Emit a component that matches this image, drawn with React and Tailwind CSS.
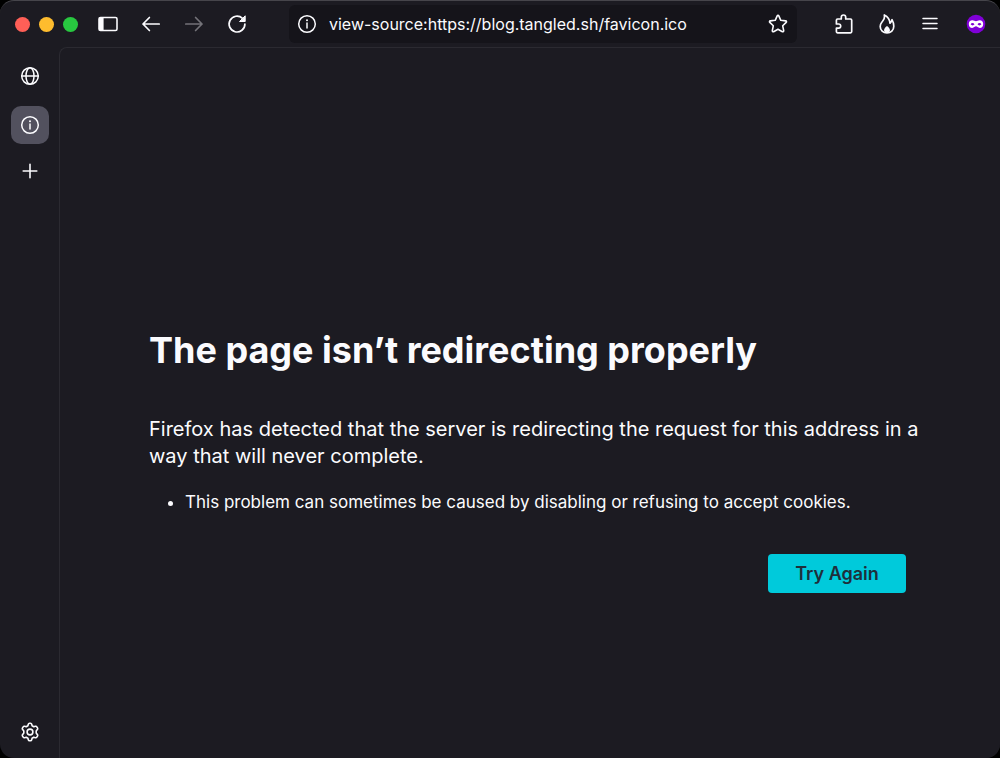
import React from "react";

const icon = {
  fill: "none",
  stroke: "currentColor",
  strokeLinecap: "round",
  strokeLinejoin: "round",
};

function SidebarIcon() {
  return (
    <svg width="20" height="16" viewBox="0 0 20 16" aria-hidden="true">
      <rect x="1" y="1.5" width="18" height="13" rx="1.5" fill="none" stroke="currentColor" strokeWidth="1.6" />
      <path d="M1 2h4.600v12H1z" fill="currentColor" />
    </svg>
  );
}

function BackIcon() {
  return (
    <svg width="20" height="20" viewBox="0 0 20 20" strokeWidth="1.7" aria-hidden="true" {...icon}>
      <path d="M18.2 10H2M8.4 3.5L2 10l6.4 6.5" />
    </svg>
  );
}

function ForwardIcon() {
  return (
    <svg width="20" height="20" viewBox="0 0 20 20" strokeWidth="1.7" aria-hidden="true" {...icon}>
      <path d="M1.8 10H18M11.6 3.5L18 10l-6.4 6.5" />
    </svg>
  );
}

function ReloadIcon() {
  return (
    <svg width="20" height="20" viewBox="0 0 20 20" strokeWidth="1.7" aria-hidden="true" {...icon}>
      <path d="M17.900 10a7.900 7.900 0 1 1-2.400-5.600" />
      <path d="M18.200 2.200v5.300h-5.300z" fill="currentColor" strokeWidth="1" />
    </svg>
  );
}

function InfoIcon() {
  return (
    <svg width="20" height="20" viewBox="0 0 20 20" strokeWidth="1.5" aria-hidden="true" {...icon}>
      <circle cx="10" cy="10" r="8.3" />
      <path d="M10 9v5" />
      <circle cx="10" cy="6.2" r="1" fill="currentColor" stroke="none" />
    </svg>
  );
}

function StarIcon() {
  return (
    <svg width="20" height="20" viewBox="0 0 20 20" strokeWidth="1.6" aria-hidden="true" {...icon}>
      <path d="M9.2 1.9a.9.9 0 0 1 1.6 0l2 4.4 4.9.6c.8.1 1.1 1 .5 1.500l-3.500 3.400 1 4.900c.1.800-.7 1.300-1.300 1L10 15.300l-4.400 2.400c-.7.300-1.400-.2-1.300-1l1-4.900L1.800 8.400c-.6-.5-.3-1.400.5-1.500l4.900-.6z" />
    </svg>
  );
}

function PuzzleIcon() {
  return (
    <svg width="20" height="20" viewBox="0 0 20 20" strokeWidth="1.7" aria-hidden="true" {...icon}>
      <path d="M7.300 5V3.200a2.200 2.200 0 0 1 4.400 0V5h4.800c.7 0 1.200.5 1.200 1.200v11.400c0 .7-.5 1.200-1.200 1.200H3.600c-.7 0-1.200-.5-1.200-1.200v-3.400h2.200a1.900 1.900 0 0 0 0-4.200H2.400V6.200C2.400 5.500 2.900 5 3.600 5z" />
    </svg>
  );
}

function FlameIcon() {
  return (
    <svg width="20" height="20" viewBox="0 0 20 20" strokeWidth="1.7" aria-hidden="true" {...icon}>
      <path d="M7.300 1c.6 2.500.1 4-1.400 5.800-.4.500-.8 1-1.100 1.500-1 1.300-1.600 2.500-1.600 4.200 0 3.700 3 6.500 6.800 6.500s6.800-2.800 6.800-6.700c0-2.200-.6-4.500-1.800-6.600-.3 1.700-.9 2.700-2 3.500C12.700 6 11 2.800 7.300 1z" />
      <path d="M10 12c-2 1.300-3 2.900-2.900 4.600.1 1.500 1.300 2.400 2.900 2.400s2.800-.9 2.900-2.400c.1-1.700-.9-3.300-2.900-4.600z" fill="currentColor" stroke="none" />
    </svg>
  );
}

function MenuIcon() {
  return (
    <svg width="20" height="20" viewBox="0 0 20 20" strokeWidth="1.5" aria-hidden="true" {...icon}>
      <path d="M3 4.500h14M3 9.500h14M3 14.500h14" />
    </svg>
  );
}

function MaskIcon() {
  return (
    <svg width="20" height="20" viewBox="0 0 20 20" aria-hidden="true">
      <circle cx="10" cy="10" r="9.300" fill="#8000d7" />
      <path
        fill="#fff"
        fillRule="evenodd"
        d="M6.400 6.200c1.500 0 2.500 1 3.600 1s2.100-1 3.600-1c2.300 0 3.600 1.500 3.600 3.700 0 2.400-1.500 4-3.400 4-1.800 0-2.600-1.600-3.800-1.600s-2 1.600-3.800 1.600c-1.900 0-3.400-1.600-3.400-4 0-2.200 1.300-3.700 3.600-3.700zM4.600 10.300c.5.700 1.200 1.100 2 1.100s1.500-.4 1.900-1.100c-.5-.8-1.200-1.200-2-1.200s-1.500.4-1.900 1.200zm6.900 0c.4.700 1.100 1.100 1.900 1.100s1.500-.4 2-1.100c-.4-.8-1.100-1.200-1.900-1.200s-1.500.4-2 1.200z"
      />
    </svg>
  );
}

function GlobeIcon() {
  return (
    <svg width="20" height="20" viewBox="0 0 20 20" strokeWidth="1.5" aria-hidden="true" {...icon}>
      <circle cx="10" cy="10" r="8.300" />
      <ellipse cx="10" cy="10" rx="4" ry="8.300" />
      <path d="M1.700 10h16.600" />
    </svg>
  );
}

function PlusIcon() {
  return (
    <svg width="20" height="20" viewBox="0 0 20 20" strokeWidth="1.600" aria-hidden="true" {...icon}>
      <path d="M10 3.200v13.600M3.200 10h13.600" />
    </svg>
  );
}

function GearIcon() {
  return (
    <svg width="20" height="20" viewBox="0 0 20 20" strokeWidth="1.600" aria-hidden="true" {...icon}>
      <path d="M8.300 2.200c.2-.7.600-1 1.200-1h1c.6 0 1 .3 1.200 1l.4 1.500 1.700 1 1.500-.4c.7-.2 1.200 0 1.500.5l.8 1.300c.3.500.2 1-.3 1.500L16.200 9v2l1.100 1.400c.5.500.6 1 .3 1.500l-.8 1.300c-.3.500-.8.7-1.500.5l-1.500-.4-1.700 1-.4 1.500c-.2.700-.6 1-1.200 1h-1c-.6 0-1-.3-1.200-1l-.4-1.500-1.700-1-1.500.4c-.7.200-1.200 0-1.500-.5l-.8-1.300c-.3-.5-.2-1 .3-1.500L3.800 11V9L2.700 7.600c-.5-.5-.6-1-.3-1.500l.8-1.300c.3-.5.8-.7 1.500-.5l1.500.4 1.700-1z" />
      <circle cx="10" cy="10" r="2.900" />
    </svg>
  );
}

function ToolbarButton({ label, disabled, children }) {
  return (
    <button
      aria-label={label}
      disabled={disabled}
      className="flex h-9 w-[43px] items-center justify-center rounded disabled:text-[#737278]"
    >
      {children}
    </button>
  );
}

function Toolbar() {
  return (
    <header className="flex h-[46px] shrink-0 items-center">
      <div className="flex gap-[9px] pl-[15px]">
        <button aria-label="Close" className="size-[15px] rounded-full bg-[#ff5f57]" />
        <button aria-label="Minimize" className="size-[15px] rounded-full bg-[#febc2e]" />
        <button aria-label="Zoom" className="size-[15px] rounded-full bg-[#28c840]" />
      </div>
      <nav className="ml-2 flex" aria-label="Navigation">
        <ToolbarButton label="Sidebar"><SidebarIcon /></ToolbarButton>
        <ToolbarButton label="Back"><BackIcon /></ToolbarButton>
        <ToolbarButton label="Forward" disabled><ForwardIcon /></ToolbarButton>
        <ToolbarButton label="Reload"><ReloadIcon /></ToolbarButton>
      </nav>
      <div className="ml-[31px] flex h-[38px] min-w-0 flex-1 items-center rounded-md bg-[#15141a]">
        <button aria-label="Site information" className="pl-2">
          <InfoIcon />
        </button>
        <input
          aria-label="Address"
          defaultValue="view-source:https://blog.tangled.sh/favicon.ico"
          className="ml-3 min-w-0 flex-1 bg-transparent text-base outline-none"
        />
        <button aria-label="Bookmark this page" className="px-[9px]">
          <StarIcon />
        </button>
      </div>
      <div className="ml-[25px] flex items-center">
        <ToolbarButton label="Extensions"><PuzzleIcon /></ToolbarButton>
        <ToolbarButton label="Forget"><FlameIcon /></ToolbarButton>
        <ToolbarButton label="Menu"><MenuIcon /></ToolbarButton>
        <div className="flex w-[49px] justify-center"><MaskIcon /></div>
      </div>
    </header>
  );
}

function Sidebar() {
  return (
    <aside className="flex w-[59px] shrink-0 flex-col items-center pt-[10px] pb-[7px]">
      <button aria-label="Globe tab" className="flex size-[38px] items-center justify-center">
        <GlobeIcon />
      </button>
      <button
        aria-label="Problem loading page"
        className="mt-[11px] flex size-[38px] items-center justify-center rounded-[10px] bg-[#52515e]"
      >
        <InfoIcon />
      </button>
      <button aria-label="New tab" className="mt-2 flex size-[38px] items-center justify-center">
        <PlusIcon />
      </button>
      <button aria-label="Settings" className="mt-auto flex size-[38px] items-center justify-center">
        <GearIcon />
      </button>
    </aside>
  );
}

export default function App() {
  return (
    <div className="h-screen bg-black font-['Inter',sans-serif] text-[#fbfbfe]">
      <div className="flex h-full flex-col overflow-hidden rounded-[14px] border-t border-[#46454b] bg-[#1c1b22]">
        <Toolbar />
        <div className="flex min-h-0 flex-1">
          <Sidebar />
          <main className="flex-1 rounded-tl-lg border-t border-l border-[#2b2a31] bg-[#1c1b22] pr-[74px] pl-[89px]">
            <h1 className="pt-[278px] text-4xl leading-[48px] font-bold">
              The page isn’t redirecting properly
            </h1>
            <p className="mt-[42px] text-xl leading-[27px]">
              Firefox has detected that the server is redirecting the request for this address in a way that will never
              complete.
            </p>
            <ul className="mt-5 list-disc pl-9 text-[17px] leading-6">
              <li>This problem can sometimes be caused by disabling or refusing to accept cookies.</li>
            </ul>
            <div className="mt-10 flex justify-end pr-5">
              <button className="h-[39px] w-[138px] rounded bg-[#00cadb] text-lg font-semibold text-[#1f2f3b]">
                Try Again
              </button>
            </div>
          </main>
        </div>
      </div>
    </div>
  );
}
